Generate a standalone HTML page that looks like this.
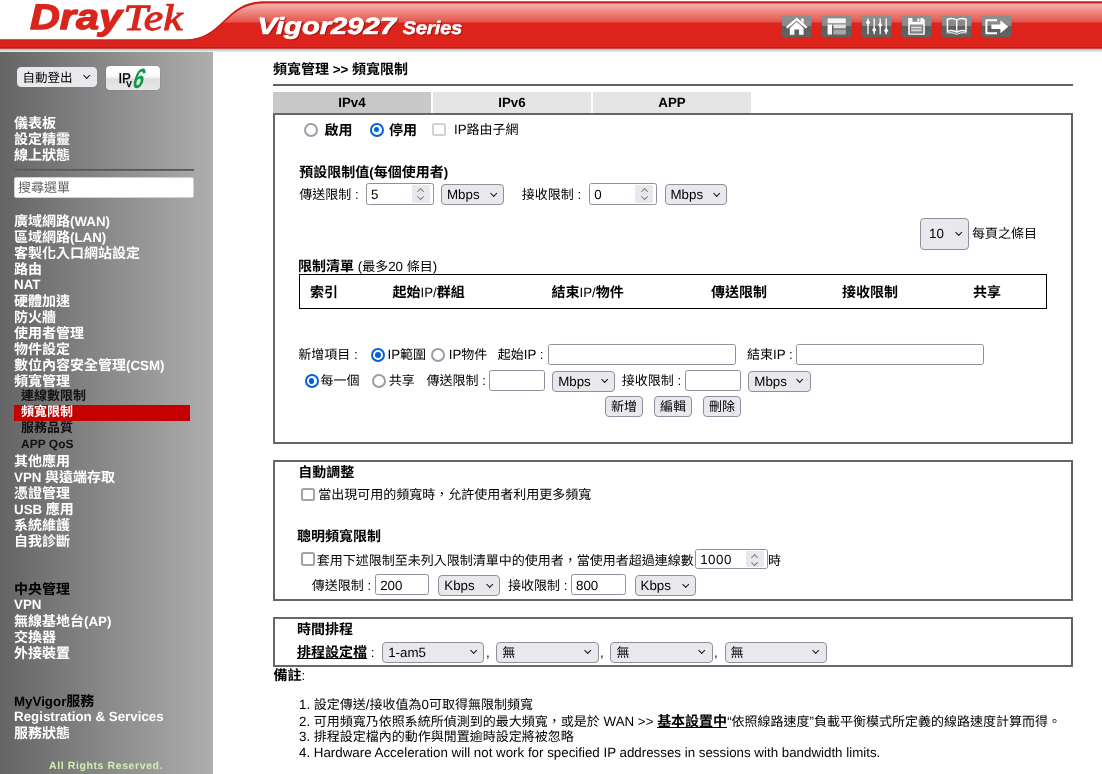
<!DOCTYPE html>
<html lang="zh-Hant">
<head>
<meta charset="utf-8">
<title>Vigor2927 Series</title>
<style>
*{box-sizing:border-box;margin:0;padding:0}
html,body{width:1102px;height:774px;overflow:hidden;background:#fff}
body{position:relative;font:13.333px/16px "Liberation Sans","Noto Sans CJK TC",sans-serif;color:#000;text-rendering:geometricPrecision}
.t{font-family:"Liberation Sans","Noto Sans CJK TC",sans-serif;font-size:13px;line-height:16px}
.t.bd{font-size:14px;font-weight:bold}
.t.bd.sm{font-size:13px}
.a{position:absolute;white-space:nowrap}
b,.b{font-weight:bold}
#main,#side,#hdr{will-change:transform}
#main{position:absolute;left:0;top:0;width:1102px;height:774px}
/* header */
#hdr{position:absolute;left:0;top:0;width:1102px;height:53px}
#model{position:absolute;left:257px;top:11px;color:#fff;font:italic bold 24px/28px "Liberation Sans",sans-serif;white-space:nowrap;text-shadow:1px 1px 1px rgba(90,0,0,.55);transform-origin:0 50%;transform:scaleX(1.13);letter-spacing:.2px}
#model small{font-size:19px;margin-left:5px}
/* sidebar */
#side{position:absolute;left:0;top:52px;width:213px;height:722px;background:linear-gradient(to right,#646464,#aeaeae)}
.m{position:absolute;left:14px;margin-top:1px;white-space:nowrap;color:#fff;font-weight:bold;height:16px}
.m.k{color:#000}
.m.s{left:21px;color:#111;font-size:12px;margin-top:0}
/* form widgets */
.in{position:absolute;height:21px;background:#fff;border:1px solid #8f8f9d;border-radius:2.5px;padding:3px 0 0 4px;font-size:13.333px;line-height:16px;white-space:nowrap;overflow:hidden}
.sel{position:absolute;height:21px;background:#e9e9ed;border:1px solid #8f8f9d;border-radius:4px;padding:2px 0 0 5px;font-size:13.333px;line-height:16px;white-space:nowrap}
.sel:after{content:"";position:absolute;right:7px;top:50%;width:4.4px;height:4.4px;margin-top:-3.8px;border-right:1.8px solid #15151a;border-bottom:1.8px solid #15151a;transform:rotate(45deg)}
.btn{position:absolute;height:21px;background:#e9e9ed;border:1px solid #8f8f9d;border-radius:4px;text-align:center;padding-top:2px;line-height:16px;white-space:nowrap}
.spin{position:absolute;right:3px;top:1px;width:18px;height:18px;background:#e9e9ed}
.spin:before,.spin:after{content:"";position:absolute;left:6.4px;width:4.2px;height:4.2px;border-left:1.5px solid #7c7c84;border-top:1.5px solid #7c7c84}
.spin:before{top:4.2px;transform:rotate(45deg)}
.spin:after{top:9px;transform:rotate(225deg)}
.rad{position:absolute;width:14px;height:14px;margin:-.5px 0 0 0;border-radius:50%;border:2px solid #9c9ca7;background:#fff}
.rad.on{border:2px solid #0060df}
.rad.on:after{content:"";position:absolute;left:2.1px;top:2.1px;width:5.8px;height:5.8px;border-radius:50%;background:#0060df}
.chk{position:absolute;width:13.4px;height:13.4px;border-radius:2.5px;border:2px solid #a3a3ad;background:#fff}
.chk.dis{border-color:#d2d2d6}
.u{background:linear-gradient(#000,#000) 0 calc(100% - 1px)/100% 1px no-repeat}
.pan{position:absolute;left:273px;width:800px;border:2px solid #666;background:#fff}
</style>
</head>
<body>
<div id="hdr">
<svg width="1102" height="53" viewBox="0 0 1102 53" style="position:absolute;left:0;top:0">
<defs>
<linearGradient id="gsh" x1="0" y1="0" x2="0" y2="1"><stop offset="0" stop-color="#8c8c8c"/><stop offset=".35" stop-color="#c4c4c4"/><stop offset="1" stop-color="#fff"/></linearGradient>
<linearGradient id="ggl" x1="0" y1="0" x2="0" y2="1"><stop offset="0" stop-color="#f5b3ac"/><stop offset="1" stop-color="#e4524a"/></linearGradient>
<linearGradient id="gic" x1="0" y1="0" x2="0" y2="1"><stop offset="0" stop-color="#8e8e8e"/><stop offset=".49" stop-color="#8a8a8a"/><stop offset=".5" stop-color="#5e5e5e"/><stop offset="1" stop-color="#626262"/></linearGradient>
<clipPath id="cpr"><path d="M0,39.5H186C222,39.5 226,1.5 262,1.5H1102V48.5H0Z"/></clipPath>
</defs>
<rect x="0" y="48" width="1102" height="4.6" fill="url(#gsh)"/>
<path d="M0,39.5H186C222,39.5 226,1.5 262,1.5H1102V48.5H0Z" fill="#dc241c"/>
<g clip-path="url(#cpr)">
<path d="M208,22.5C232,22.5 234,3.5 266,3.5H1102V22.5Z" fill="url(#ggl)"/>
<path d="M0,39.5H186C222,39.5 226,1.5 262,1.5H1102" fill="none" stroke="#c9221b" stroke-width="3"/>
<rect x="0" y="47.2" width="1102" height="1.3" fill="#b81d17"/>
</g>
<!-- logo -->
<g fill="#d9261c" stroke="#d9261c" stroke-linejoin="round" font-family="Liberation Sans, sans-serif">
<text x="30" y="29.4" font-size="35.5" font-weight="bold" font-style="italic" stroke-width="1.3" textLength="92" lengthAdjust="spacingAndGlyphs">Dray</text>
<text x="123.6" y="29.6" font-family="Liberation Serif, serif" font-size="37" font-style="italic" stroke-width="1.1" textLength="59" lengthAdjust="spacingAndGlyphs">Tek</text>
</g>
<!-- icons -->
<g>
<g transform="translate(782,15.6)"><rect width="29.5" height="21.4" rx="2" fill="url(#gic)"/><path d="M3.9,11.3 14.7,1.9 25.5,11.3 23.9,13 14.7,5 5.5,13Z M19.3,2.8H21.6V7.6L19.3,5.6Z M7.8,12.3 14.7,6.3 21.6,12.3V19.2H17.1V13.8H12.4V19.2H7.8Z" fill="#fff"/></g>
<g transform="translate(822,15.6)"><rect width="29.5" height="21.4" rx="2" fill="url(#gic)"/><rect x="5.6" y="2.8" width="18.2" height="4.8" fill="#f4f4f4"/><rect x="5.6" y="8.9" width="4.4" height="10" fill="#fff"/><rect x="11.4" y="8.9" width="12.4" height="3.9" fill="#e2e2e2"/><rect x="11.4" y="14" width="12.4" height="4.9" fill="#a8a8a8"/></g>
<g transform="translate(862,15.6)"><rect width="29.5" height="21.4" rx="2" fill="url(#gic)"/><g stroke="#fff" stroke-width="1.3"><path d="M6,3V18.6M12.2,3V18.6M18.2,3V18.6M24.2,3V18.6"/></g><g fill="#fff"><path d="M6,4.2 8.2,6.9 6,9.6 3.8,6.9Z"/><path d="M12.2,11.6 14.4,14.3 12.2,17 10,14.3Z"/><path d="M18.2,6.6 20.4,9.3 18.2,12 16,9.3Z"/><path d="M24.2,12.2 26.4,14.9 24.2,17.6 22,14.9Z"/></g></g>
<g transform="translate(902,15.6)"><rect width="29.5" height="21.4" rx="2" fill="url(#gic)"/><path d="M6.2,2.4H20.6L22.8,4.4V19.2H6.2Z M7.8,9H21.2V17.8H7.8Z M10.4,2.4V6.2H18.4V2.4Z" fill="#fff" fill-rule="evenodd"/><rect x="15.4" y="2.9" width="2" height="2.8" fill="#fff"/><rect x="8.6" y="9.8" width="11.8" height="7.2" fill="#9a9a9a"/><path d="M9.4,12H19.6M9.4,14.6H19.6" stroke="#eee" stroke-width="1"/></g>
<g transform="translate(942,15.6)"><rect width="29.5" height="21.4" rx="2" fill="url(#gic)"/><path d="M5.4,3.6C8.6,2.4 12,2.6 14.7,4.4 17.4,2.6 20.8,2.4 24,3.6V15.6C20.8,14.6 17.4,14.8 14.7,16.6 12,14.8 8.6,14.6 5.4,15.6Z" fill="none" stroke="#fff" stroke-width="1.5"/><path d="M14.7,4.4V16.6" stroke="#fff" stroke-width="1.4"/><path d="M4.6,17.4C8.4,16.6 12,17 14.7,18.8 17.4,17 21,16.6 24.8,17.4" fill="none" stroke="#ddd" stroke-width="1.1"/></g>
<g transform="translate(982,15.6)"><rect width="29.5" height="21.4" rx="2" fill="url(#gic)"/><path d="M15,4.6H4.4V17.6H15" fill="none" stroke="#fff" stroke-width="2" stroke-linejoin="round"/><path d="M9.4,8.9H18.4V4.6L26.2,11.1 18.4,17.6V13.3H9.4Z" fill="#fff"/></g>
</g>
<g font-family="Liberation Sans, sans-serif" font-weight="bold" font-style="italic" stroke-linejoin="round">
<defs><g id="mt"><text x="257.6" y="34.2" font-size="23.4" stroke-width=".7" textLength="138.4" lengthAdjust="spacingAndGlyphs">Vigor2927</text><text x="402.8" y="34.2" font-size="18.2" stroke-width=".5" textLength="59.6" lengthAdjust="spacingAndGlyphs">Series</text></g></defs>
<use href="#mt" fill="#7a0d08" stroke="#7a0d08" opacity=".55" transform="translate(1.2,1.3)"/>
<use href="#mt" fill="#fff" stroke="#fff"/>
</g>
</svg>
</div>

<div id="side">
<div class="sel" style="left:17px;top:14.5px;width:80px;height:20.5px;border-color:#e9e9ed;padding:2px 0 0 4.5px"><span class="t" style="font-size:12.5px">自動登出</span></div>
<div style="position:absolute;left:106px;top:13.5px;width:54px;height:24px;border-radius:4px;background:linear-gradient(#fff 0%,#fcfcfc 42%,#dedede 56%,#e8e8e8 100%);box-shadow:0 0 1px rgba(0,0,0,.35)">
<svg width="54" height="24" viewBox="0 0 54 24" style="position:absolute;left:0;top:0"><g font-family="Liberation Sans, sans-serif"><text x="12.4" y="16.7" font-size="14.3" stroke="#000" stroke-width=".35" textLength="12.6" lengthAdjust="spacingAndGlyphs">IP</text><text x="20.2" y="21.4" font-size="11" stroke="#000" stroke-width=".3">v</text><text transform="translate(25.2,22) skewX(-17) scale(.68,1)" font-size="28" font-weight="bold" fill="#0b9b48">6</text></g></svg>
</div>
<div class="m" style="top:62px"><span class="t bd">儀表板</span></div>
<div class="m" style="top:78px"><span class="t bd">設定精靈</span></div>
<div class="m" style="top:94px"><span class="t bd">線上狀態</span></div>
<div style="position:absolute;left:14px;top:116.5px;width:180px;height:2px;background:linear-gradient(#505050,#6a6a6a)"></div>
<div style="position:absolute;left:14px;top:125px;width:180px;height:21px;background:#fff;border:1px solid #d0d0d0;border-radius:2px;padding:3px 0 0 3px;color:#666;line-height:14px"><span class="t" style="line-height:14px">搜尋選單</span></div>
<div class="m" style="top:160px"><span class="t bd">廣域網路</span>(WAN)</div>
<div class="m" style="top:176px"><span class="t bd">區域網路</span>(LAN)</div>
<div class="m" style="top:192px"><span class="t bd">客製化入口網站設定</span></div>
<div class="m" style="top:208px"><span class="t bd">路由</span></div>
<div class="m" style="top:224px">NAT</div>
<div class="m" style="top:240px"><span class="t bd">硬體加速</span></div>
<div class="m" style="top:256px"><span class="t bd">防火牆</span></div>
<div class="m" style="top:272px"><span class="t bd">使用者管理</span></div>
<div class="m" style="top:288px"><span class="t bd">物件設定</span></div>
<div class="m" style="top:304px"><span class="t bd">數位內容安全管理</span>(CSM)</div>
<div class="m" style="top:320px"><span class="t bd">頻寬管理</span></div>
<div class="m s" style="top:336px"><span class="t bd sm">連線數限制</span></div>
<div style="position:absolute;left:14px;top:353px;width:176px;height:15.5px;background:#c40000"></div>
<div class="m s" style="top:352px;color:#fff"><span class="t bd sm">頻寬限制</span></div>
<div class="m s" style="top:368px"><span class="t bd sm">服務品質</span></div>
<div class="m s" style="top:384px">APP QoS</div>
<div class="m" style="top:400px"><span class="t bd">其他應用</span></div>
<div class="m" style="top:416px">VPN <span class="t bd">與遠端存取</span></div>
<div class="m" style="top:432px"><span class="t bd">憑證管理</span></div>
<div class="m" style="top:448px">USB <span class="t bd">應用</span></div>
<div class="m" style="top:464px"><span class="t bd">系統維護</span></div>
<div class="m" style="top:480px"><span class="t bd">自我診斷</span></div>
<div class="m k" style="top:528px"><span class="t bd">中央管理</span></div>
<div class="m" style="top:544px">VPN</div>
<div class="m" style="top:560px"><span class="t bd">無線基地台</span>(AP)</div>
<div class="m" style="top:576px"><span class="t bd">交換器</span></div>
<div class="m" style="top:592px"><span class="t bd">外接裝置</span></div>
<div class="m k" style="top:640px">MyVigor<span class="t bd">服務</span></div>
<div class="m" style="top:656px">Registration &amp; Services</div>
<div class="m" style="top:672px"><span class="t bd">服務狀態</span></div>
<div class="a" style="left:49px;top:706.5px;color:#d2f0b4;font:bold 10.5px/14px 'Liberation Sans',sans-serif;letter-spacing:.6px">All Rights Reserved.</div>
</div>

<div id="main">
<div class="a b" style="left:273px;top:61px"><span class="t bd">頻寬管理</span> &gt;&gt; <span class="t bd">頻寬限制</span></div>
<div style="position:absolute;left:273px;top:84px;width:800px;height:2px;background:#626262"></div>
<div class="a b" style="left:273px;top:92.3px;width:158px;height:21px;background:#c8c8c8;text-align:center;line-height:21px">IPv4</div>
<div class="a b" style="left:433px;top:92.3px;width:158px;height:21px;background:#e4e4e4;text-align:center;line-height:21px">IPv6</div>
<div class="a b" style="left:593px;top:92.3px;width:158px;height:21px;background:#e4e4e4;text-align:center;line-height:21px">APP</div>

<div class="pan" style="top:113px;height:331px"></div>
<div class="rad" style="left:304px;top:123px"></div>
<div class="a b" style="left:324.6px;top:121.5px"><span class="t bd">啟用</span></div>
<div class="rad on" style="left:369.5px;top:123px"></div>
<div class="a b" style="left:389px;top:121.5px"><span class="t bd">停用</span></div>
<div class="chk dis" style="left:432.2px;top:122.8px"></div>
<div class="a" style="left:454px;top:121.5px">IP<span class="t">路由子網</span></div>

<div class="a b" style="left:299.2px;top:163.6px"><span class="t bd">預設限制值</span>(<span class="t bd">每個使用者</span>)</div>
<div class="a" style="left:299.2px;top:187px"><span class="t">傳送限制</span> :</div>
<div class="in" style="left:366px;top:183px;width:68px;height:21.5px">5<span class="spin"></span></div>
<div class="sel" style="left:441px;top:184.4px;width:63px">Mbps</div>
<div class="a" style="left:521.8px;top:187px"><span class="t">接收限制</span> :</div>
<div class="in" style="left:589.3px;top:183px;width:68px;height:21.5px">0<span class="spin"></span></div>
<div class="sel" style="left:664.5px;top:184.4px;width:62.5px">Mbps</div>

<div class="sel" style="left:920px;top:218px;width:49px;height:31.5px;padding:6.5px 0 0 8px">10</div>
<div class="a" style="left:972px;top:226px"><span class="t">每頁之條目</span></div>

<div class="a" style="left:298px;top:258.3px"><b><span class="t bd">限制清單</span></b> (<span class="t">最多</span>20 <span class="t">條目</span>)</div>
<div style="position:absolute;left:299px;top:274px;width:748px;height:35px;border:1px solid #000"></div>
<div class="a b" style="left:310px;top:283.6px"><span class="t bd">索引</span></div>
<div class="a b" style="left:392.5px;top:283.6px"><span class="t bd">起始</span><span style="font-weight:normal">IP/</span><span class="t bd">群組</span></div>
<div class="a b" style="left:551.5px;top:283.6px"><span class="t bd">結束</span><span style="font-weight:normal">IP/</span><span class="t bd">物件</span></div>
<div class="a b" style="left:711px;top:283.6px"><span class="t bd">傳送限制</span></div>
<div class="a b" style="left:842px;top:283.6px"><span class="t bd">接收限制</span></div>
<div class="a b" style="left:973px;top:283.6px"><span class="t bd">共享</span></div>

<div class="a" style="left:298.3px;top:346.8px"><span class="t">新增項目</span> :</div>
<div class="rad on" style="left:370.8px;top:348.3px"></div>
<div class="a" style="left:387.5px;top:346.8px">IP<span class="t">範圍</span></div>
<div class="rad" style="left:431px;top:348.3px"></div>
<div class="a" style="left:448.7px;top:346.8px">IP<span class="t">物件</span></div>
<div class="a" style="left:497.7px;top:346.8px"><span class="t">起始</span>IP :</div>
<div class="in" style="left:548px;top:343.5px;width:188px"></div>
<div class="a" style="left:747px;top:346.8px"><span class="t">結束</span>IP :</div>
<div class="in" style="left:796px;top:343.5px;width:188px"></div>

<div class="rad on" style="left:304.5px;top:374.2px"></div>
<div class="a" style="left:320.6px;top:372.7px"><span class="t">每一個</span></div>
<div class="rad" style="left:372.1px;top:374.2px"></div>
<div class="a" style="left:388.7px;top:372.7px"><span class="t">共享</span></div>
<div class="a" style="left:426.6px;top:372.7px"><span class="t">傳送限制</span> :</div>
<div class="in" style="left:488.8px;top:370px;width:56px"></div>
<div class="sel" style="left:552.2px;top:370.6px;width:63px">Mbps</div>
<div class="a" style="left:621.8px;top:372.7px"><span class="t">接收限制</span> :</div>
<div class="in" style="left:684.8px;top:370px;width:56px"></div>
<div class="sel" style="left:748.3px;top:370.6px;width:62.5px">Mbps</div>

<div class="btn" style="left:605.3px;top:396px;width:37.6px"><span class="t">新增</span></div>
<div class="btn" style="left:654.3px;top:396px;width:37.6px"><span class="t">編輯</span></div>
<div class="btn" style="left:703.1px;top:396px;width:37.6px"><span class="t">刪除</span></div>

<div class="pan" style="top:460px;height:140.5px"></div>
<div class="a b" style="left:298.3px;top:464.3px"><span class="t bd">自動調整</span></div>
<div class="chk" style="left:301.2px;top:487.5px"></div>
<div class="a" style="left:318.3px;top:486.8px"><span class="t">當出現可用的頻寬時，允許使用者利用更多頻寬</span></div>
<div class="a b" style="left:297px;top:528px"><span class="t bd">聰明頻寬限制</span></div>
<div class="chk" style="left:301.3px;top:552.4px"></div>
<div class="a" style="left:316.8px;top:553px"><span class="t">套用下述限制至未列入限制清單中的使用者，當使用者超過連線數</span></div>
<div class="in" style="left:695.2px;top:549px;width:72.4px;height:20px;padding-top:2px;letter-spacing:.5px">1000<span class="spin" style="top:1px;height:16px"></span></div>
<div class="a" style="left:768px;top:553px"><span class="t">時</span></div>
<div class="a" style="left:311.8px;top:578.3px"><span class="t">傳送限制</span> :</div>
<div class="in" style="left:375.2px;top:574.3px;width:54.2px">200</div>
<div class="sel" style="left:438.3px;top:574.8px;width:61.7px">Kbps</div>
<div class="a" style="left:508px;top:578px"><span class="t">接收限制</span> :</div>
<div class="in" style="left:571px;top:574.3px;width:55px">800</div>
<div class="sel" style="left:634.5px;top:574.8px;width:61.4px">Kbps</div>

<div class="pan" style="top:617px;height:50px"></div>
<div class="a b" style="left:297px;top:620.9px"><span class="t bd">時間排程</span></div>
<div class="a" style="left:297px;top:643.6px"><b class="u"><span class="t bd">排程設定檔</span></b> :</div>
<div class="sel" style="left:382.2px;top:641.9px;width:102.3px;height:20.8px">1-am5</div>
<div class="a" style="left:486px;top:645px">,</div>
<div class="sel" style="left:496.3px;top:641.9px;width:102.3px;height:20.8px"><span class="t">無</span></div>
<div class="a" style="left:600px;top:645px">,</div>
<div class="sel" style="left:610.4px;top:641.9px;width:102.3px;height:20.8px"><span class="t">無</span></div>
<div class="a" style="left:714px;top:645px">,</div>
<div class="sel" style="left:724.5px;top:641.9px;width:102.3px;height:20.8px"><span class="t">無</span></div>

<div class="a" style="left:273.4px;top:666.5px"><b><span class="t bd">備註</span></b>:</div>
<div class="a" style="left:299px;top:696.5px">1. <span class="t">設定傳送</span>/<span class="t">接收值為</span>0<span class="t">可取得無限制頻寬</span></div>
<div class="a" style="left:299px;top:712.5px">2. <span class="t">可用頻寬乃依照系統所偵測到的最大頻寬，或是於</span> WAN &gt;&gt; <b class="u"><span class="t bd">基本設置中</span></b>“<span class="t">依照線路速度</span>”<span class="t">負載平衡模式所定義的線路速度計算而得。</span></div>
<div class="a" style="left:299px;top:728.5px">3. <span class="t">排程設定檔內的動作與閒置逾時設定將被忽略</span></div>
<div class="a" style="left:299px;top:744.5px">4. Hardware Acceleration will not work for specified IP addresses in sessions with bandwidth limits.</div>
</div>

</body>
</html>
